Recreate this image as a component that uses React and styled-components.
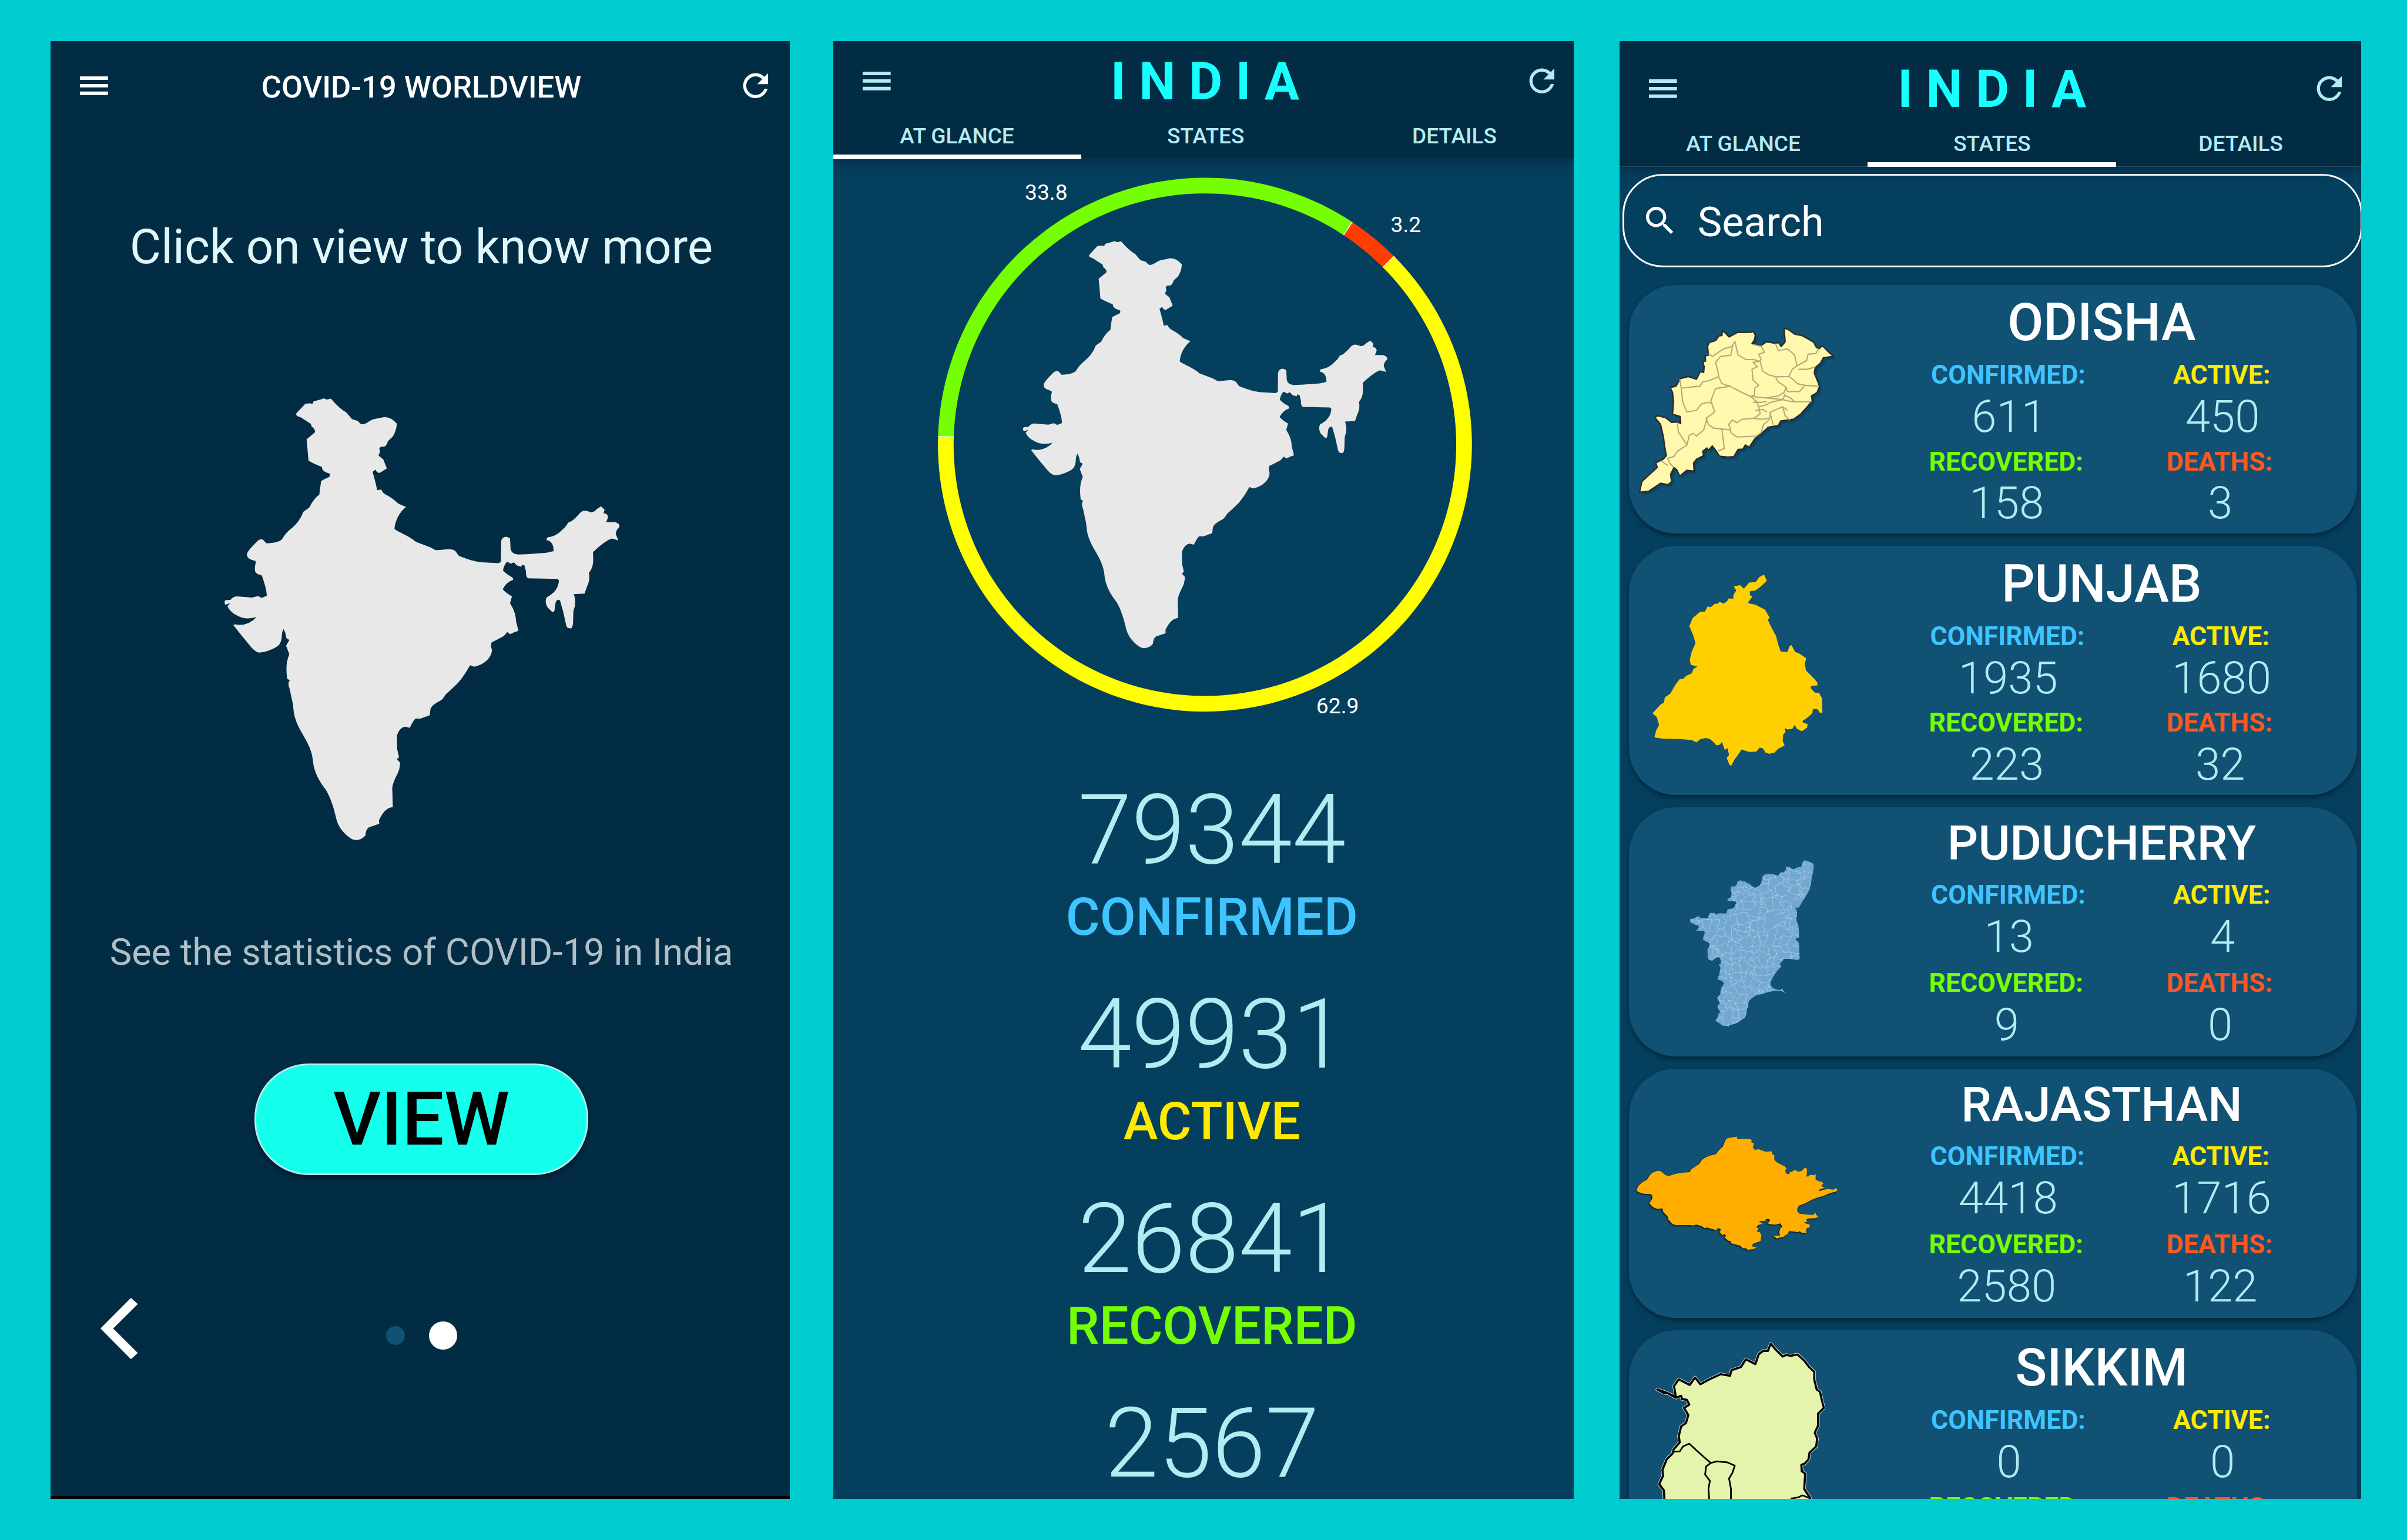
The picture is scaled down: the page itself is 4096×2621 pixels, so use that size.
import React from "react";
import styled, { createGlobalStyle, css } from "styled-components";

/* Sizes are written in design units and scaled to the page. */
const SCALE = 0.8192;
const u = (n) => `${+(n * SCALE).toFixed(3)}px`;

const color = {
  page: "#00cccf",
  navy: "#022c43",
  blue: "#053f5e",
  card: "#115173",
  ice: "#b2ebf2",
  cyan: "#18ffff",
  confirmed: "#40c4ff",
  active: "#ffea00",
  recovered: "#76ff03",
  deaths: "#ff5722",
};

const GlobalStyle = createGlobalStyle`
  *, *::before, *::after { box-sizing: border-box; }
  html, body { margin: 0; padding: 0; background: ${color.page}; }
  body { font-family: Roboto, "Liberation Sans", sans-serif; overflow: hidden; }
  svg { display: block; flex: none; }
`;

/* ---------- shared parts ---------- */

const Page = styled.main`
  display: flex;
  align-items: flex-start;
  width: 4096px;
  height: 2621px;
  padding: ${u(86)} 0 0 ${u(105.5)};
  background: ${color.page};
`;

const Phone = styled.section`
  display: flex;
  flex-direction: column;
  flex: none;
  width: ${(p) => u(p.$width)};
  height: ${u(3028)};
  margin-right: ${(p) => u(p.$gap || 0)};
  background: ${(p) => p.$bg};
  overflow: hidden;
`;

const IconSvg = styled.svg`
  width: ${u(77.7)};
  height: ${u(77.7)};
  fill: currentColor;
`;

const MenuIcon = () => (
  <IconSvg viewBox="0 0 24 24">
    <path d="M3 18h18v-2.25H3V18zm0-4.9h18v-2.2H3v2.2zM3 6v2.25h18V6H3z" />
  </IconSvg>
);

const RefreshIcon = () => (
  <IconSvg viewBox="0 0 24 24">
    <path d="M17.65 6.35C16.2 4.9 14.21 4 12 4c-4.42 0-7.99 3.58-7.99 8s3.57 8 7.99 8c3.73 0 6.84-2.55 7.73-6h-2.08c-.82 2.33-3.04 4-5.65 4-3.31 0-6-2.69-6-6s2.69-6 6-6c1.66 0 3.14.69 4.22 1.78L13 11h7V4l-2.35 2.35z" />
  </IconSvg>
);

const SearchIcon = () => (
  <IconSvg viewBox="0 0 24 24">
    <path d="M15.5 14h-.79l-.28-.27C15.41 12.59 16 11.11 16 9.5 16 5.91 13.09 3 9.5 3S3 5.91 3 9.5 5.91 16 9.5 16c1.61 0 3.09-.59 4.23-1.57l.27.28v.79l5 4.99L20.49 19l-4.99-5zm-6 0C7.01 14 5 11.99 5 9.5S7.01 5 9.5 5 14 7.01 14 9.5 11.99 14 9.5 14z" />
  </IconSvg>
);

const INDIA =
  "M312 95 L345 63 Q360 60 372 63 L376 55 Q400 50 414 45 L424 49 L440 46 Q470 78 497 92 Q508 104 518 114 L540 120 Q550 133 560 131 C575 128 585 117 600 114 L638 107 Q662 107 684 129 Q682 155 668 173 L651 187 Q646 203 638 205 L624 206 L619 212 L622 222 L616 235 L634 248 L647 278 L620 293 Q610 293 605 282 L594 289 Q606 325 611 350 L626 348 Q632 360 645 366 Q665 375 690 395 L718 406 Q680 435 675 479 C690 490 725 500 755 522 L808 540 L826 549 C850 552 880 540 900 552 L913 568 C940 578 970 588 1000 590 L1060 593 L1069 589 L1070 520 Q1073 505 1090 505 L1103 510 L1105 545 Q1108 563 1135 564 L1165 563 L1238 558 L1264 553 Q1265 520 1238 516 L1240 508 Q1275 503 1295 483 Q1310 472 1318 458 Q1335 455 1362 426 Q1375 412 1402 424 Q1415 423 1424 413 L1440 404 L1453 415 L1449 427 Q1465 428 1466 440 L1459 456 L1490 456 Q1510 460 1508 472 Q1490 488 1496 500 L1504 517 L1480 511 Q1455 518 1410 556 C1412 590 1412 605 1395 625 Q1400 650 1388 670 L1379 694 L1339 696 Q1350 725 1338 750 C1335 775 1340 800 1330 809 Q1315 812 1311 800 L1300 755 L1288 717 Q1280 710 1272 722 L1267 752 L1260 756 L1241 739 Q1230 720 1239 706 C1265 695 1283 675 1284 650 L1278 645 L1170 643 Q1161 640 1162 620 L1156 600 L1148 598 L1144 605 L1128 600 L1117 590 L1107 595 L1092 588 Q1080 600 1077 617 Q1090 630 1112 640 L1115 648 Q1090 655 1076 679 Q1085 690 1110 703 L1103 726 C1120 750 1125 770 1125 785 L1134 818 L1120 822 L1103 829 L1093 822 L1080 835 Q1060 845 1035 856 Q1030 865 1036 882 C1035 905 1010 930 970 937 L955 932 Q925 980 900 1000 L865 1029 Q855 1045 845 1050 Q810 1065 808 1080 L806 1098 L770 1110 L754 1109 Q745 1115 732 1140 L715 1136 Q695 1138 684 1165 L685 1210 L692 1238 L684 1244 L696 1256 Q695 1280 685 1295 Q668 1325 667 1340 L669 1404 Q640 1405 618 1447 L619 1459 L580 1471 Q568 1480 568 1497 Q555 1513 531 1513 Q510 1512 480 1480 Q463 1460 458 1435 C450 1405 440 1375 422 1347 Q380 1300 374 1255 C370 1210 350 1185 325 1145 C300 1100 303 1085 299 1060 L287 1010 Q278 990 288 982 L278 977 C273 940 275 920 286 895 L274 867 L286 848 L275 842 Q272 820 264 812 Q257 825 258 840 Q255 865 235 873 Q205 888 175 890 Q160 888 145 872 Q110 835 79 799 L84 796 Q130 805 165 772 Q125 782 95 768 Q65 755 57 736 L67 726 L49 731 Q43 720 50 716 L68 715 Q78 703 92 703 L148 707 L170 702 L184 708 L203 701 L200 680 Q188 640 183 633 Q160 628 159 618 Q157 605 162 590 L160 585 Q130 580 129 565 Q128 555 160 527 Q180 505 192 518 L201 527 Q245 525 258 514 Q275 490 290 480 Q325 455 338 422 Q350 415 360 408 Q375 380 397 365 Q402 330 404 320 Q410 315 432 307 Q440 300 435 295 Q405 287 407 273 Q375 262 357 252 Q352 200 350 181 L381 158 Q384 150 368 138 L366 130 L328 108 Q308 103 312 95Z";

/* ---------- world view screen ---------- */

const TitleBar = styled.header`
  display: flex;
  align-items: center;
  justify-content: space-between;
  height: ${u(184)};
  padding: 0 ${u(33)} 0 ${u(51)};
  color: #fff;
`;

const ScreenTitle = styled.h1`
  margin: 0;
  padding: ${u(5)} 0 0 0;
  margin-left: ${u(-14)};
  font-size: ${u(64)};
  line-height: ${u(76)};
  font-weight: 500;
`;

const Welcome = styled.div`
  display: flex;
  flex-direction: column;
  align-items: center;
  flex: 1;
  padding-left: ${u(4)};
`;

const Prompt = styled.p`
  margin: ${u(182.6)} 0 0;
  font-size: ${u(100)};
  line-height: ${u(120)};
  color: #e0f7fa;
`;

const CountryMap = styled.svg`
  width: ${u(821.6)};
  height: ${u(918.2)};
  margin: ${u(255.5)} 0 0 ${u(3)};
  fill: #e8e8e8;
`;

const Caption = styled.p`
  margin: ${u(187.5)} 0 0;
  font-size: ${u(77)};
  line-height: ${u(90)};
  color: #b0bec5;
`;

const ViewButton = styled.button`
  width: ${u(692.8)};
  height: ${u(232)};
  margin: ${u(186.2)} 0 0;
  padding: 0;
  border: ${u(4)} solid ${color.ice};
  border-radius: ${u(113)};
  background: #14ffec;
  box-shadow: 0 ${u(6)} ${u(12)} rgba(0, 0, 0, 0.35);
  color: #000;
  font: 500 ${u(154.5)} / ${u(180)} Roboto, "Liberation Sans", sans-serif;
`;

const Pager = styled.nav`
  display: flex;
  align-items: center;
  align-self: stretch;
  height: ${u(160)};
  margin-top: ${u(252.6)};
  padding-left: ${u(99)};
`;

const Chevron = styled.svg`
  width: ${u(77.5)};
  height: ${u(127.4)};
  margin: 0 ${u(516.3)} ${u(28)} 0;
  fill: #fff;
`;

const Dot = styled.span`
  flex: none;
  width: ${(p) => u(p.$active ? 58.4 : 38.8)};
  height: ${(p) => u(p.$active ? 58.4 : 38.8)};
  border-radius: 50%;
  background: ${(p) => (p.$active ? "#fff" : color.card)};
  & + & { margin-left: ${u(50)}; }
`;

const BottomEdge = styled.div`
  height: ${u(5.5)};
  background: #000;
`;

function WorldScreen() {
  return (
    <Phone $width={1535.5} $gap={90} $bg={color.navy}>
      <TitleBar>
        <MenuIcon />
        <ScreenTitle>COVID-19 WORLDVIEW</ScreenTitle>
        <RefreshIcon />
      </TitleBar>
      <Welcome>
        <Prompt>Click on view to know more</Prompt>
        <CountryMap viewBox="46 45 1464 1469" preserveAspectRatio="none">
          <path d={INDIA} />
        </CountryMap>
        <Caption>See the statistics of COVID-19 in India</Caption>
        <ViewButton>VIEW</ViewButton>
        <Pager>
          <Chevron viewBox="0 0 77.5 127.4">
            <path d="M0 63.5 63.2 0 77.5 12.8 26.5 63.5 77.5 114.4 63.2 127.4z" />
          </Chevron>
          <Dot />
          <Dot $active />
        </Pager>
      </Welcome>
      <BottomEdge />
    </Phone>
  );
}

/* ---------- country header with tabs ---------- */

const Header = styled.header`
  position: relative;
  flex: none;
  padding-top: ${(p) => u(p.$top)};
  background: ${color.navy};
  color: ${color.ice};
  box-shadow: 0 ${u(6)} ${u(22)} rgba(0, 20, 35, 0.45);
`;

const HeaderRow = styled.div`
  display: flex;
  align-items: center;
  height: ${u(165.4)};
  padding: 0 ${u(27.5)} 0 ${u(51)};
`;

const CountryName = styled.h1`
  flex: 1;
  margin: 0;
  padding: ${u(1.5)} 0 0 ${u(10)};
  text-align: center;
  font-size: ${u(107.5)};
  line-height: ${u(126)};
  font-weight: 700;
  letter-spacing: ${u(27.5)};
  color: ${color.cyan};
`;

/* The tab strip is a little wider than the screen and runs off its right edge. */
const Tabs = styled.nav`
  display: grid;
  grid-template-columns: repeat(3, ${u(516.7)});
  height: ${u(80)};
  margin-left: ${u(-1.5)};
  border-bottom: ${u(1.5)} solid #2c4a62;
`;

const Tab = styled.span`
  height: ${u(80)};
  padding-bottom: ${u(4.2)};
  font-size: ${u(45.2)};
  line-height: ${u(63.6)};
  font-weight: 500;
  text-align: center;
  ${(p) =>
    p.$active &&
    css`
      border-bottom: ${u(10.8)} solid #fff;
    `}
`;

const TABS = ["AT GLANCE", "STATES", "DETAILS"];

function CountryHeader({ active, top = 0 }) {
  return (
    <Header $top={top}>
      <HeaderRow>
        <MenuIcon />
        <CountryName>INDIA</CountryName>
        <RefreshIcon />
      </HeaderRow>
      <Tabs>
        {TABS.map((t) => (
          <Tab key={t} $active={t === active}>
            {t}
          </Tab>
        ))}
      </Tabs>
    </Header>
  );
}

/* ---------- at a glance screen ---------- */

const Chart = styled.svg`
  width: ${u(1538)};
  height: ${u(1189)};
  text {
    font: 400 45.4px Roboto, "Liberation Sans", sans-serif;
    fill: #fff;
    text-anchor: middle;
  }
`;

const CX = 2503;
const CY = 924;
const R_OUT = 554.6;
const R_IN = 522;

const point = (r, deg) => {
  const a = (deg * Math.PI) / 180;
  return `${(CX + r * Math.cos(a)).toFixed(2)} ${(CY + r * Math.sin(a)).toFixed(2)}`;
};

const arc = (from, to) => {
  const large = to - from > 180 ? 1 : 0;
  return `M${point(R_OUT, from)} A${R_OUT} ${R_OUT} 0 ${large} 1 ${point(R_OUT, to)} L${point(R_IN, to)} A${R_IN} ${R_IN} 0 ${large} 0 ${point(R_IN, from)} Z`;
};

const SLICES = [
  { from: -44.9, to: 181.75, fill: "#ffff00" },
  { from: 181.75, to: 303.5, fill: "#76ff03" },
  { from: 303.5, to: 315.1, fill: "#ff3d00" },
];

const LABELS = [
  { x: 2173.3, y: 415, text: "33.8" },
  { x: 2920.5, y: 482.7, text: "3.2" },
  { x: 2778.5, y: 1482.7, text: "62.9" },
];

const Totals = styled.div`
  display: flex;
  flex-direction: column;
  align-items: center;
  gap: ${u(68.3)};
  margin-top: ${u(92.2)};
  padding-left: ${u(35)};
`;

const Total = styled.div`
  text-align: center;
`;

const TotalNumber = styled.div`
  font-size: ${u(200.6)};
  line-height: ${u(226)};
  font-weight: 300;
  color: ${color.ice};
`;

const TotalLabel = styled.div`
  margin-top: ${u(4.5)};
  font-size: ${u(108.2)};
  line-height: ${u(126)};
  font-weight: 500;
  color: ${(p) => color[p.$kind]};
`;

const TOTALS = [
  ["79344", "confirmed"],
  ["49931", "active"],
  ["26841", "recovered"],
  ["2567", null],
];

function GlanceScreen() {
  return (
    <Phone $width={1538} $gap={95.5} $bg={color.blue}>
      <CountryHeader active="AT GLANCE" />
      <Chart viewBox="1731 331 1538 1189">
        {SLICES.map((s) => (
          <path key={s.fill} d={arc(s.from, s.to)} fill={s.fill} />
        ))}
        {SLICES.map((s) => (
          <path key={s.from} d={`M${point(R_IN, s.from)} L${point(R_OUT, s.from)}`} stroke="#fff" strokeWidth="1.8" />
        ))}
        <svg x="2125" y="501" width="757.6" height="846.4" viewBox="46 45 1464 1469" preserveAspectRatio="none">
          <path d={INDIA} fill="#e8e8e8" />
        </svg>
        {LABELS.map((l) => (
          <text key={l.text} x={l.x} y={l.y}>
            {l.text}
          </text>
        ))}
      </Chart>
      <Totals>
        {TOTALS.map(([n, kind]) => (
          <Total key={n}>
            <TotalNumber>{n}</TotalNumber>
            {kind && <TotalLabel $kind={kind}>{kind.toUpperCase()}</TotalLabel>}
          </Total>
        ))}
      </Totals>
    </Phone>
  );
}

/* ---------- states screen ---------- */

const SearchBox = styled.div`
  display: flex;
  align-items: center;
  flex: none;
  width: ${u(1536.5)};
  height: ${u(194)};
  margin: ${u(14.8)} 0 0 ${u(6)};
  padding-left: ${u(35)};
  border: ${u(4.2)} solid #fff;
  border-radius: ${u(84)};
  color: #fff;
`;

const SearchText = styled.span`
  padding: ${u(9)} 0 0 ${u(39.5)};
  font-size: ${u(85.4)};
  line-height: ${u(100)};
`;

const StateList = styled.div`
  display: flex;
  flex-direction: column;
  gap: ${u(26.1)};
  margin: ${u(36)} 0 0 ${u(19.2)};
`;

const Card = styled.article`
  display: flex;
  flex: none;
  width: ${u(1513.2)};
  height: ${u(516.9)};
  border-radius: ${u(97)};
  background: ${color.card};
  box-shadow: 0 ${u(5)} ${u(9)} rgba(0, 18, 32, 0.5);
`;

const StateMap = styled.svg`
  width: ${u(536.6)};
  height: ${u(516.9)};
`;

const CardBody = styled.div`
  width: ${u(887)};
  padding-top: ${u(14.8)};
`;

/* Names too long for the full size are set smaller. */
const StateName = styled.h2`
  margin: 0 0 ${(p) => u(p.$long ? 14.8 : 13.6)};
  padding-left: ${u(4)};
  text-align: center;
  font-size: ${(p) => u(p.$long ? 100.6 : 108.3)};
  line-height: ${(p) => u(p.$long ? 120 : 127)};
  font-weight: 500;
  color: #fff;
`;

const StatRow = styled.div`
  display: flex;
  justify-content: space-around;
  margin-bottom: ${(p) => u(p.$long ? 9.5 : 6.6)};
`;

const Stat = styled.div`
  text-align: center;
`;

const StatLabel = styled.div`
  font-size: ${u(54.4)};
  line-height: ${u(64)};
  font-weight: 700;
  color: ${(p) => color[p.$kind]};
`;

const StatNumber = styled.div`
  margin-top: ${u(0.6)};
  padding-left: ${u(3)};
  font-size: ${u(93)};
  line-height: ${u(109)};
  font-weight: 300;
  color: ${color.ice};
`;

const ODISHA =
  "M219 342 L226 358 L233 378 L250 353 L277 352 L284 347 L288 370 L286 395 L281 415 L299 428 L311 405 L330 414 L336 408 L342 432 L350 405 L348 328 L356 335 L371 363 L385 370 L399 390 L410 408 L415 435 L421 444 L428 427 L440 460 L451 487 L430 495 L424 525 L413 550 L411 580 L417 620 L422 655 L417 690 L405 710 L407 735 L398 765 L383 810 L368 840 L341 850 L336 875 L315 885 L305 910 L287 950 L275 998 L267 985 L262 1008 L252 1010 L243 1050 L230 1053 L213 1048 L205 1015 L198 990 L190 1015 L187 1002 L178 1020 L180 1045 L165 1065 L159 1085 L160 1132 L145 1127 L130 1160 L124 1125 L118 1112 L111 1150 L113 1190 L106 1208 L90 1200 L65 1245 L46 1250 L51 1190 L65 1155 L83 1110 L80 1085 L95 1065 L102 1045 L98 985 L96 940 L90 870 L78 830 L84 820 L101 832 L113 858 L126 855 L132 865 L131 825 L115 812 L117 740 L115 690 L110 662 L122 655 L131 612 L148 600 L165 615 L173 572 L180 577 L181 545 L178 518 L184 513 L183 485 L190 480 L188 430 L192 408 L205 398 L212 372 L218 370Z";
const ODISHA_DISTRICTS =
  "M245 402 L240 430 L222 445 L213 460 L198 488 L190 470 M245 402 L252 480 L268 505 L285 505 L297 515 M240 430 L237 480 L215 488 L205 520 L212 600 L190 625 L178 630 L172 655 L150 660 L135 665 M130 615 L134 680 L136 740 L145 800 L165 790 L175 755 L188 745 L195 750 M212 605 L218 640 L235 655 L205 668 L195 735 L203 800 L185 835 L190 870 L201 890 L218 895 L223 1005 L210 1018 M285 422 L300 430 L307 465 L295 475 L300 505 L297 515 L283 520 L292 545 L281 560 L283 620 L295 650 L287 665 L286 705 L278 712 M235 655 L260 690 L278 712 L310 720 L335 710 L348 690 L352 660 L335 630 L330 602 L315 590 L303 570 L298 515 M330 415 L336 455 L355 445 L370 480 L375 540 L365 560 L358 600 L330 602 M375 540 L395 510 L398 475 L415 470 L420 445 M378 560 L395 560 L412 548 M358 600 L368 620 L375 640 L392 650 L420 655 M352 660 L355 685 L380 685 L390 655 M310 720 L345 730 L365 742 L405 742 M278 712 L290 740 L295 770 L310 760 L320 745 L345 730 L350 700 M295 770 L298 810 L285 835 L300 840 L318 835 L320 800 L345 770 L355 790 M318 800 L325 870 M345 770 L350 820 L360 845 M201 890 L235 900 L238 920 L250 940 L290 935 L300 915 L305 870 L318 840 M285 835 L260 840 L250 860 L240 845 L232 870 L237 900 M125 860 L127 910 L145 985 L150 930 L158 920 L165 935 L180 900 L187 835 M145 985 L125 1020 L118 1050 L105 1060 L110 1090 L118 1110 M92 1075 L105 1100 M283 745 L300 745 L312 740 M348 705 L362 722 L370 742 M288 790 L304 785 L312 800";
const PUNJAB =
  "M306 256 L312 290 L298 325 L288 345 L276 350 L277 372 L282 378 L272 415 L288 425 L308 452 L318 498 L314 510 L322 555 L331 600 L336 650 L341 688 L355 690 L359 660 L363 650 L371 690 L380 700 L386 710 L394 725 L391 760 L394 795 L407 830 L417 860 L418 878 L405 880 L403 892 L412 918 L421 920 L427 950 L428 1030 L423 1033 L418 1012 L408 1010 L407 1035 L396 1060 L386 1078 L388 1088 L397 1095 L396 1115 L385 1135 L375 1122 L370 1100 L365 1122 L355 1125 L349 1117 L351 1140 L346 1155 L345 1190 L349 1215 L335 1235 L328 1255 L317 1262 L309 1255 L304 1232 L297 1228 L290 1250 L275 1252 L259 1238 L250 1275 L244 1295 L238 1328 L234 1325 L228 1285 L233 1270 L230 1230 L224 1240 L218 1195 L214 1210 L207 1215 L200 1195 L193 1180 L185 1173 L173 1180 L165 1198 L155 1185 L130 1179 L95 1177 L77 1170 L81 1130 L87 1100 L82 1055 L73 1035 L80 1015 L90 985 L97 975 L99 945 L110 925 L122 870 L130 842 L138 840 L143 825 L155 810 L159 785 L167 772 L153 762 L151 735 L155 690 L163 640 L158 595 L150 545 L157 500 L172 465 L183 463 L188 435 L195 438 L203 420 L210 418 L213 408 L222 418 L229 405 L231 390 L242 390 L242 370 L248 345 L243 322 L256 315 L264 335 L275 300 L289 297 L296 270Z";
const PUDUCHERRY =
  "M1090 354 L1096 360 L1112 364 L1128 370 L1141 378 L1141 400 L1136 430 L1129 460 L1125 495 L1117 525 L1105 550 L1084 582 L1055 632 L1036 632 L1030 628 L1042 645 L1044 668 L1040 705 L1052 738 L1056 775 L1056 806 L1040 808 L1037 818 L1056 838 L1059 932 L1045 937 L1005 930 L968 930 L945 958 L951 976 L935 992 L912 1022 L890 1062 L889 1080 Q900 1102 930 1110 L948 1110 L961 1103 L963 1115 L981 1131 L955 1116 L925 1116 Q880 1117 845 1134 L810 1140 Q790 1148 765 1175 L759 1195 L762 1205 L752 1220 L750 1252 L740 1273 L690 1305 L651 1315 L648 1323 L610 1317 L568 1287 L582 1273 L588 1248 L598 1242 L581 1206 L596 1188 L578 1157 L598 1135 L601 1105 L620 1072 L608 1058 L581 1049 L592 1020 L599 982 L590 962 L602 955 L601 940 L592 920 L575 922 L550 942 L525 930 L523 870 L530 868 L537 840 L496 818 L502 795 L509 775 L500 767 L457 767 L475 745 L470 738 L423 718 L422 699 L450 692 L472 680 L482 692 L528 694 L530 675 L541 660 L552 665 L560 660 L570 672 L595 664 L632 666 L641 640 L675 636 L692 604 L685 595 L640 592 L640 582 L660 570 L665 545 L659 540 L660 508 L682 508 L692 500 L697 480 L718 472 L725 480 L740 478 L755 490 L770 492 L775 503 L800 517 L820 508 L834 492 L845 448 L860 438 L905 437 L935 446 L950 425 L965 428 L980 410 L978 394 L1000 394 L1010 405 L1030 408 L1040 400 L1070 392 L1074 370Z";
const RAJASTHAN =
  "M110 768 L118 745 Q130 725 170 704 L190 675 Q215 652 240 652 Q258 655 268 668 Q285 685 310 678 Q350 663 420 660 L427 645 Q440 635 475 612 L492 588 Q515 565 572 555 Q585 535 612 512 L625 480 Q632 462 650 460 L696 453 L696 466 L770 466 L781 475 L777 485 L793 490 L788 515 L797 530 L822 526 L860 540 L895 538 L901 545 L898 553 L912 562 L912 588 Q930 608 950 614 L975 627 L983 638 L975 650 L980 657 L975 664 L998 672 L1002 658 L1015 657 L1030 646 L1050 656 L1068 654 L1085 637 L1097 634 L1103 650 L1099 684 L1110 684 L1117 676 L1145 677 L1153 671 L1152 702 L1168 712 L1190 716 L1197 726 L1184 741 L1207 749 L1170 763 L1175 770 L1218 757 L1258 761 L1269 752 L1281 763 L1270 773 L1235 781 Q1200 800 1160 808 Q1130 818 1090 842 L1060 853 Q1043 862 1045 885 L1056 901 L1110 907 L1138 908 L1150 895 L1156 908 L1167 918 L1155 927 L1105 930 L1098 938 L1104 950 L1085 950 L1100 960 L1117 964 L1119 980 L1102 985 L1095 1000 L1099 1015 L1070 1012 L1060 1003 L1050 1008 L998 1002 L990 1018 L965 1036 L925 1045 L907 1030 L945 1028 L940 1010 L947 985 L959 978 L948 958 L920 965 L880 962 L876 955 L887 940 L882 932 L863 934 L858 944 L822 945 L845 960 L818 967 L807 978 L820 990 L810 1004 L828 1010 L837 1025 L832 1060 L790 1076 L779 1090 L810 1098 L790 1107 L757 1112 L748 1102 L728 1102 L715 1088 L660 1073 L658 1060 L643 1058 L624 1041 L631 1028 L622 1020 L610 1025 L593 1008 L602 995 L588 984 L572 996 L520 982 L505 985 L490 973 L458 965 L440 970 L420 967 L340 968 L318 960 L296 935 L290 915 L268 895 L260 870 L235 873 Q205 870 185 840 L202 815 Q205 790 190 787 L150 785 L125 777Z";
const SIKKIM =
  "M320 395 L330 430 L345 475 L352 465 L362 470 L376 462 L390 500 L400 540 L411 570 L411 620 L416 680 L423 695 L427 750 L431 795 L419 830 L419 905 L412 950 L417 985 L415 1035 L401 1075 L399 1115 L392 1140 L384 1150 L385 1190 L392 1205 L390 1300 L402 1355 L402 1420 L90 1420 L98 1360 L97 1310 L87 1270 L95 1220 L94 1180 L103 1115 L115 1080 L117 1055 L130 1010 L128 970 L133 910 L143 890 L148 840 L139 795 L150 775 L145 745 L135 740 L133 720 L122 732 L106 705 L95 700 L83 680 L100 697 L122 725 L118 660 L128 617 L151 652 L162 605 L173 648 L190 620 L215 585 L235 595 L238 560 L258 540 L268 492 L288 522 L295 460 L304 440 L314 440Z";
const SIKKIM_DISTRICTS =
  "M117 1068 L130 1066 L137 1035 L150 1018 L165 1060 L180 1100 L195 1138 L208 1128 L230 1135 L245 1155 L240 1200 L233 1235 L237 1300 L237 1420 M195 1138 L185 1160 L183 1210 L193 1250 L190 1300 L193 1420 M362 1360 L378 1352 L386 1340 L402 1358";

/* Sub-district borders: a jittered mesh, clipped to the outline. */
const mesh = (() => {
  let seed = 11;
  const rnd = () => {
    seed = (seed * 16807) % 2147483647;
    return seed / 2147483647 - 0.5;
  };
  const step = 42;
  const cols = 19;
  const rows = 25;
  const pts = [];
  for (let j = 0; j < rows; j++) {
    pts.push([]);
    for (let i = 0; i < cols; i++) {
      pts[j].push([400 + i * step + rnd() * 38 + (j % 2) * 20, 340 + j * step + rnd() * 38]);
    }
  }
  let d = "";
  const edge = (a, b) => {
    if (rnd() > 0.32) return;
    d += `M${a[0].toFixed(0)} ${a[1].toFixed(0)}`;
    for (let k = 1; k < 4; k++) {
      const t = k / 4;
      d += `L${(a[0] + (b[0] - a[0]) * t + rnd() * 22).toFixed(0)} ${(a[1] + (b[1] - a[1]) * t + rnd() * 22).toFixed(0)}`;
    }
    d += `L${b[0].toFixed(0)} ${b[1].toFixed(0)}`;
  };
  for (let j = 0; j < rows; j++)
    for (let i = 0; i < cols; i++) {
      if (i + 1 < cols) edge(pts[j][i], pts[j][i + 1]);
      if (j + 1 < rows) edge(pts[j][i], pts[j + 1][i]);
    }
  return d;
})();

const fixedStroke = { vectorEffect: "non-scaling-stroke", strokeLinejoin: "round" };

const OdishaMap = () => (
  <StateMap viewBox="24 86 539.4 1397.5" preserveAspectRatio="none">
    <path d={ODISHA} fill="#06283c" opacity="0.35" transform="translate(5 14)" />
    <path d={ODISHA} fill="#fff8ad" stroke="#2b2b2b" strokeWidth="2.4" {...fixedStroke} />
    <path d={ODISHA_DISTRICTS} fill="none" stroke="#b3ab78" strokeWidth="2.1" {...fixedStroke} />
  </StateMap>
);

const PunjabMap = () => (
  <StateMap viewBox="24 94 539.4 1397.5" preserveAspectRatio="none">
    <path d={PUNJAB} fill="#ffcf01" />
  </StateMap>
);

const PuducherryMap = () => (
  <StateMap viewBox="66.6 48 1502.5 1447.4" preserveAspectRatio="none">
    <clipPath id="puducherry">
      <path d={PUDUCHERRY} />
    </clipPath>
    <path d={PUDUCHERRY} fill="#73a9d1" />
    <path d={mesh} fill="none" stroke="#a9cbe3" strokeWidth="3" clipPath="url(#puducherry)" />
  </StateMap>
);

const RajasthanMap = () => (
  <StateMap viewBox="66.6 58 1502.5 1447.4" preserveAspectRatio="none">
    <filter id="soft" x="-10%" y="-10%" width="120%" height="120%">
      <feGaussianBlur stdDeviation="3" />
    </filter>
    <path d={RAJASTHAN} fill="#000" opacity="0.85" transform="translate(-4 4)" filter="url(#soft)" />
    <path d={RAJASTHAN} fill="#ffae00" />
  </StateMap>
);

const SikkimMap = () => (
  <StateMap viewBox="24 311 539.4 1550.7" preserveAspectRatio="none">
    <path d={SIKKIM} fill="none" stroke="#dfe6e9" strokeWidth="5.4" {...fixedStroke} />
    <path d={SIKKIM} fill="#e4f4ac" stroke="#000" strokeWidth="3.6" {...fixedStroke} />
    <path d={SIKKIM_DISTRICTS} fill="none" stroke="#000" strokeWidth="2.8" {...fixedStroke} />
  </StateMap>
);

const STATES = [
  { name: "ODISHA", Map: OdishaMap, confirmed: 611, active: 450, recovered: 158, deaths: 3 },
  { name: "PUNJAB", Map: PunjabMap, confirmed: 1935, active: 1680, recovered: 223, deaths: 32 },
  { name: "PUDUCHERRY", Map: PuducherryMap, confirmed: 13, active: 4, recovered: 9, deaths: 0 },
  { name: "RAJASTHAN", Map: RajasthanMap, confirmed: 4418, active: 1716, recovered: 2580, deaths: 122 },
  { name: "SIKKIM", Map: SikkimMap, confirmed: 0, active: 0, recovered: 0, deaths: 0 },
];

const ROWS = [
  ["confirmed", "active"],
  ["recovered", "deaths"],
];

function StateCard({ data }) {
  const long = data.name.length > 8;
  return (
    <Card>
      <data.Map />
      <CardBody>
        <StateName $long={long}>{data.name}</StateName>
        {ROWS.map((row) => (
          <StatRow key={row[0]} $long={long}>
            {row.map((kind) => (
              <Stat key={kind}>
                <StatLabel $kind={kind}>{kind.toUpperCase()}:</StatLabel>
                <StatNumber>{data[kind]}</StatNumber>
              </Stat>
            ))}
          </StatRow>
        ))}
      </CardBody>
    </Card>
  );
}

function StatesScreen() {
  return (
    <Phone $width={1540.5} $bg={color.blue}>
      <CountryHeader active="STATES" top={15.5} />
      <SearchBox>
        <SearchIcon />
        <SearchText>Search</SearchText>
      </SearchBox>
      <StateList>
        {STATES.map((s) => (
          <StateCard key={s.name} data={s} />
        ))}
      </StateList>
    </Phone>
  );
}

export default function App() {
  return (
    <>
      <GlobalStyle />
      <Page>
        <WorldScreen />
        <GlanceScreen />
        <StatesScreen />
      </Page>
    </>
  );
}
